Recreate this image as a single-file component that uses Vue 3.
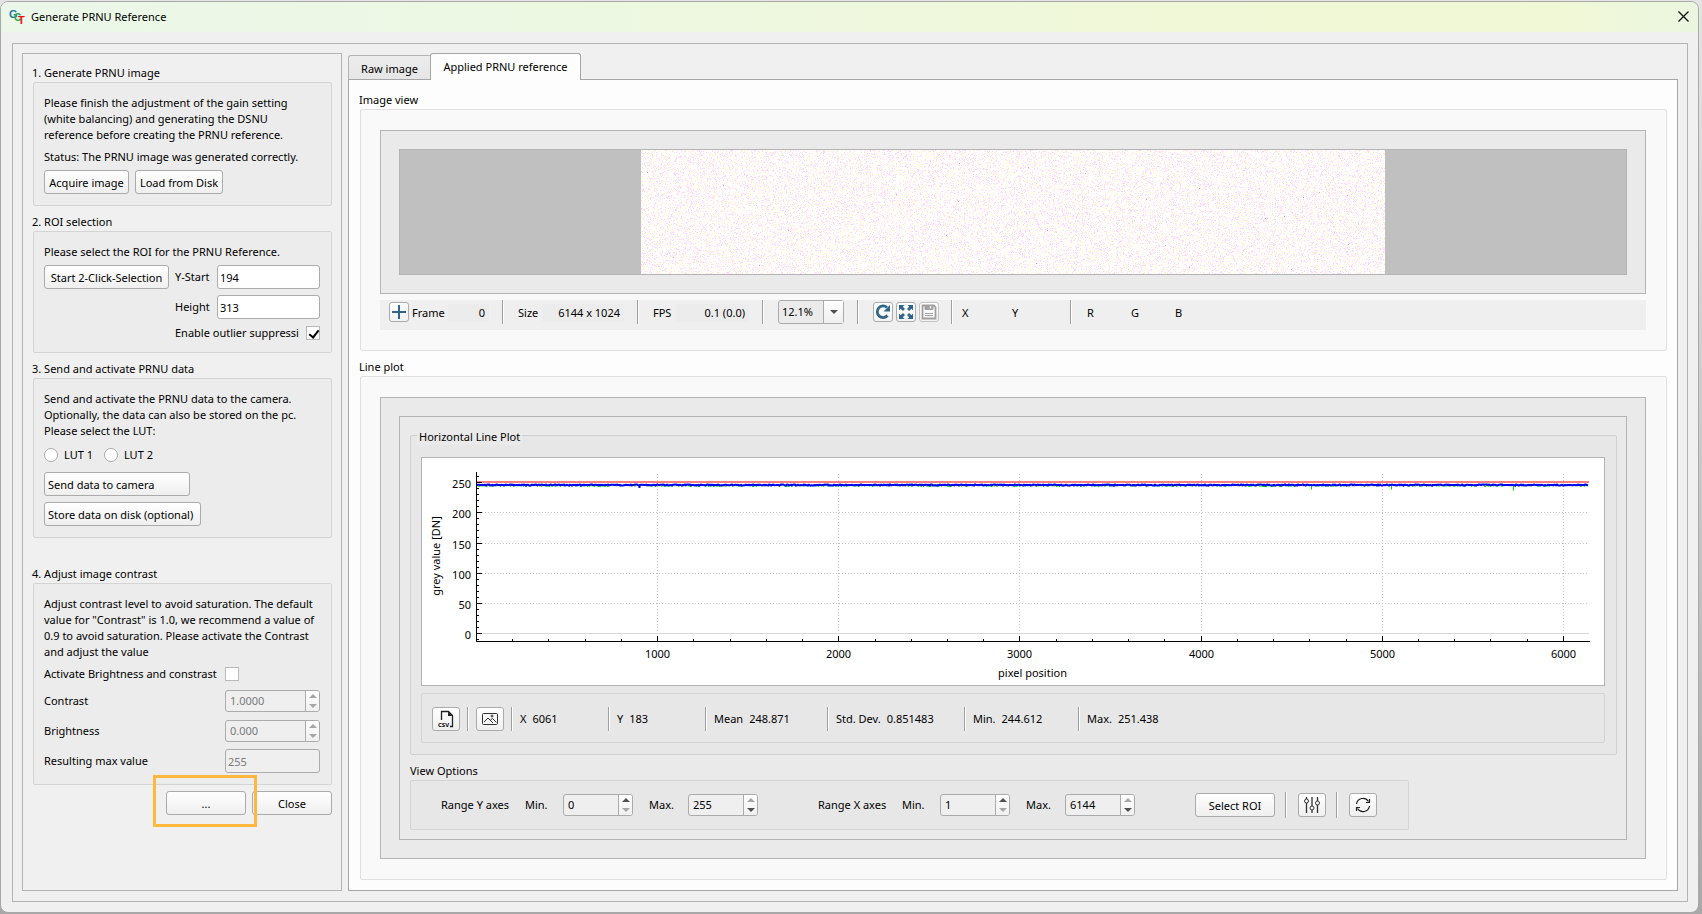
<template>
  <div class="desktop">
    <div class="window">
      <header class="titlebar">
        <svg class="logo" viewBox="0 0 16 16" width="16" height="16" aria-hidden="true">
          <text x="0" y="9" class="logo-g">G</text>
          <text x="5" y="12" class="logo-c">C</text>
          <text x="9" y="15" class="logo-t">T</text>
        </svg>
        <h1>Generate PRNU Reference</h1>
        <button class="window-close" aria-label="Close window">
          <svg viewBox="0 0 11 11" width="11" height="11">
            <path d="M0.5 0.5l10 10M10.5 0.5l-10 10" stroke="#111" stroke-width="1.300" fill="none" />
          </svg>
        </button>
      </header>

      <div class="frame">
        <aside class="sidebar">
          <h2>1. Generate PRNU image</h2>
          <section class="box">
            <p>
              Please finish the adjustment of the gain setting<br />
              (white balancing) and generating the DSNU<br />
              reference before creating the PRNU reference.
            </p>
            <p>Status: The PRNU image was generated correctly.</p>
            <div class="row">
              <button class="btn acquire">Acquire image</button>
              <button class="btn load">Load from Disk</button>
            </div>
          </section>

          <h2>2. ROI selection</h2>
          <section class="box">
            <p>Please select the ROI for the PRNU Reference.</p>
            <div class="roi">
              <button class="btn">Start 2-Click-Selection</button>
              <label for="y-start">Y-Start</label>
              <input id="y-start" v-model="yStart" type="text" class="field" />
              <label for="roi-height" class="second">Height</label>
              <input id="roi-height" v-model="roiHeight" type="text" class="field" />
              <div class="outlier">
                <label for="outlier">Enable outlier suppressi</label>
                <input id="outlier" v-model="outlier" type="checkbox" class="check" />
              </div>
            </div>
          </section>

          <h2>3. Send and activate PRNU data</h2>
          <section class="box">
            <p>
              Send and activate the PRNU data to the camera.<br />
              Optionally, the data can also be stored on the pc.<br />
              Please select the LUT:
            </p>
            <div class="luts">
              <label v-for="n in 2" :key="n">
                <input v-model="lut" type="radio" name="lut" class="radio" :value="n" />
                LUT {{ n }}
              </label>
            </div>
            <button class="btn left send">Send data to camera</button>
            <button class="btn left store">Store data on disk (optional)</button>
          </section>

          <h2 class="spaced">4. Adjust image contrast</h2>
          <section class="box">
            <p>
              Adjust contrast level to avoid saturation. The default<br />
              value for "Contrast" is 1.0, we recommend a value of<br />
              0.9 to avoid saturation. Please activate the Contrast<br />
              and adjust the value
            </p>
            <div class="setting activate">
              <label for="activate">Activate Brightness and constrast</label>
              <span class="slot">
                <input id="activate" v-model="activate" type="checkbox" class="check" />
              </span>
            </div>
            <div v-for="item in levels" :key="item.id" class="setting">
              <label :for="item.id">{{ item.label }}</label>
              <span class="slot spin disabled">
                <input :id="item.id" type="text" :value="item.value" disabled />
                <span class="arrows">
                  <button disabled :aria-label="item.label + ' up'"><i class="up"></i></button>
                  <button disabled :aria-label="item.label + ' down'"><i class="down"></i></button>
                </span>
              </span>
            </div>
            <div class="setting">
              <label for="max-value">Resulting max value</label>
              <input id="max-value" type="text" class="slot field" value="255" disabled />
            </div>
          </section>

          <div class="footer">
            <span class="marked"><button class="btn">...</button></span>
            <button class="btn">Close</button>
          </div>
        </aside>

        <main class="content">
          <nav class="tabs" role="tablist">
            <button
              v-for="name in tabs"
              :key="name"
              role="tab"
              class="tab"
              :class="{ active: name === activeTab }"
              :aria-selected="name === activeTab"
              @click="activeTab = name"
            >
              {{ name }}
            </button>
          </nav>

          <div class="pane">
            <h2>Image view</h2>
            <section class="group">
              <div class="panel">
                <div class="viewer">
                  <canvas ref="canvas" width="744" height="124"></canvas>
                </div>
              </div>
              <div class="statusbar">
                <button class="tool" aria-label="Add">
                  <svg viewBox="0 0 18 18" width="18" height="18">
                    <path d="M9 2v14M2 9h14" stroke="#2f6587" stroke-width="2" fill="none" />
                  </svg>
                </button>
                <span class="name frame-name">Frame</span>
                <output class="w-frame">0</output>
                <i class="sep wide"></i>
                <span class="name">Size</span>
                <output class="w-size">6144 x 1024</output>
                <i class="sep wide"></i>
                <span class="name fps">FPS</span>
                <output class="w-fps">0.1 (0.0)</output>
                <i class="sep wide"></i>
                <span class="combo">
                  <select aria-label="Zoom">
                    <option>12.1%</option>
                  </select>
                  <span class="combo-arrow"><i class="down"></i></span>
                </span>
                <i class="sep wide"></i>
                <div class="tools">
                  <button class="tool" aria-label="Reset view">
                    <svg viewBox="0 0 18 18" width="18" height="18">
                      <path d="M13.500 12.500A5.800 5.800 0 1 1 13 4.500" stroke="#2f6587" stroke-width="2.800" fill="none" />
                      <path d="M16 2v6.500h-6.500z" fill="#2f6587" />
                    </svg>
                  </button>
                  <button class="tool" aria-label="Fit to window">
                    <svg viewBox="0 0 18 18" width="18" height="18">
                      <path d="M2 2h5.500l-1.700 1.700 2.200 2.200-2.100 2.100-2.200-2.200L2 7.500zM16 2v5.500l-1.700-1.700-2.200 2.200-2.100-2.100 2.200-2.200L10.500 2zM2 16v-5.500l1.700 1.700 2.200-2.200 2.100 2.100-2.200 2.200L7.500 16zM16 16h-5.500l1.700-1.700-2.200-2.200 2.100-2.100 2.200 2.200 1.700-1.700z" fill="#2f6587" />
                    </svg>
                  </button>
                  <button class="tool" aria-label="Save" disabled>
                    <svg viewBox="0 0 18 18" width="18" height="18" fill="none" stroke="#a0a0a0">
                      <path d="M2.500 2.500h11.500l1.500 1.500v11.500h-13z" stroke-width="1.800" />
                      <path d="M5 2v4.500h8V2" fill="#a0a0a0" />
                      <path d="M10.500 3v2.500" stroke="#eee" stroke-width="1.500" />
                      <path d="M5 10.500h8M5 12.500h8" />
                    </svg>
                  </button>
                </div>
                <i class="sep narrow"></i>
                <span class="coord">X</span>
                <span class="coord last">Y</span>
                <i class="sep narrow"></i>
                <div class="rgb">
                  <span v-for="c in ['R', 'G', 'B']" :key="c">{{ c }}</span>
                </div>
              </div>
            </section>

            <h2>Line plot</h2>
            <section class="group">
              <div class="panel">
                <div class="inner">
                  <div class="hplot">
                    <h3>Horizontal Line Plot</h3>
                    <div ref="plotBox" class="plot">
                      <svg :width="plotWidth" height="227">
                        <g class="grid">
                          <line v-for="v in [50, 100, 150, 200]" :key="v" x1="60" :x2="right" :y1="y(v)" :y2="y(v)" />
                          <line v-for="v in xMajor" :key="v" :x1="x(v)" :x2="x(v)" y1="16" :y2="y(0)" />
                        </g>
                        <line class="zero" x1="55" :x2="right" :y1="y(0)" :y2="y(0)" />
                        <line class="red" x1="55" :x2="right" y1="24" y2="24" />
                        <path :d="greenLine" stroke="#00e000" fill="none" />
                        <path :d="blueLine" stroke="#0000f0" stroke-width="2" fill="none" />
                        <g class="axis">
                          <line x1="54.500" x2="54.500" y1="14" y2="183" />
                          <line x1="54" :x2="right + 1" y1="183.500" y2="183.500" />
                          <line v-for="v in yTicks" :key="v" x1="54" :x2="v % 50 ? 57 : 60" :y1="y(v)" :y2="y(v)" />
                          <line v-for="v in xTicks" :key="v" :x1="x(v)" :x2="x(v)" y1="183" :y2="v % 1000 ? 181 : 178" />
                        </g>
                        <text v-for="v in [0, 50, 100, 150, 200, 250]" :key="v" x="49" :y="y(v) + 5" text-anchor="end">{{ v }}</text>
                        <text v-for="v in xMajor" :key="v" :x="x(v)" y="200" text-anchor="middle">{{ v }}</text>
                        <text :x="(54 + right) / 2" y="219" text-anchor="middle">pixel position</text>
                        <text transform="translate(18 98) rotate(-90)" text-anchor="middle">grey value [DN]</text>
                      </svg>
                    </div>
                    <div class="stats">
                      <button class="btn icon" aria-label="Export CSV">
                        <svg viewBox="0 0 18 18" width="18" height="18">
                          <path d="M4.500 10V1.500h7l4 4v11h-2.500" fill="none" stroke="#222" stroke-width="1.300" />
                          <path d="M11 1.500v4.500h4.500z" fill="#222" />
                          <text x="1" y="17" class="csv">CSV</text>
                        </svg>
                      </button>
                      <i class="sep"></i>
                      <button class="btn icon" aria-label="Export image">
                        <svg viewBox="0 0 18 18" width="18" height="18" fill="none" stroke="#333">
                          <rect x="1.500" y="3.500" width="15" height="11" rx="1" />
                          <path d="M3 12l4-4 5 5M9.500 10l2-1.500 4 4" />
                          <circle cx="11" cy="6" r="1" />
                        </svg>
                      </button>
                      <template v-for="s in stats" :key="s.label">
                        <i class="sep"></i>
                        <span class="stat" :class="s.size">{{ s.label }} <output>{{ s.value }}</output></span>
                      </template>
                    </div>
                  </div>

                  <h2>View Options</h2>
                  <div class="options">
                    <div v-for="r in ranges" :key="r.axis" class="range">
                      <span class="range-name">Range {{ r.axis }} axes</span>
                      <template v-for="end in ['Min', 'Max']" :key="end">
                        <label :for="r.axis + end">{{ end }}.</label>
                        <span class="spin">
                          <input :id="r.axis + end" v-model="r[end]" type="text" />
                          <span class="arrows">
                            <button :disabled="end === 'Max'" aria-label="Up"><i class="up"></i></button>
                            <button :disabled="end === 'Min'" aria-label="Down"><i class="down"></i></button>
                          </span>
                        </span>
                      </template>
                    </div>
                    <button class="btn select-roi">Select ROI</button>
                    <i class="sep"></i>
                    <button class="btn icon" aria-label="Plot settings">
                      <svg viewBox="0 0 18 18" width="18" height="18" fill="none" stroke="#333">
                        <path d="M3.500 1v2M3.500 7v10M9 1v9M9 14v3M14.500 1v4M14.500 9v8" stroke-width="1.300" />
                        <circle cx="3.500" cy="5" r="2" />
                        <circle cx="9" cy="12" r="2" />
                        <circle cx="14.500" cy="7" r="2" />
                      </svg>
                    </button>
                    <i class="sep"></i>
                    <button class="btn icon" aria-label="Refresh">
                      <svg viewBox="0 0 18 18" width="18" height="18" fill="none" stroke="#222" stroke-width="1.200">
                        <path d="M2.500 8a6.500 6.500 0 0 1 12-2.500M15.500 10a6.500 6.500 0 0 1-12 2.500" />
                        <path d="M15.500 3v3.500h-3.500M2.500 15v-3.500h3.500" />
                      </svg>
                    </button>
                  </div>
                </div>
              </div>
            </section>
          </div>
        </main>
      </div>
    </div>
  </div>
</template>

<script setup>
import { ref, reactive, computed, onMounted, onUnmounted } from "vue";

const yStart = ref("194");
const roiHeight = ref("313");
const outlier = ref(true);
const activate = ref(false);
const lut = ref(null);

const tabs = ["Raw image", "Applied PRNU reference"];
const activeTab = ref("Applied PRNU reference");

const levels = [
  { id: "contrast", label: "Contrast", value: "1.0000" },
  { id: "brightness", label: "Brightness", value: "0.000" },
];

const stats = [
  { label: "X", value: "6061", size: "s-x" },
  { label: "Y", value: "183", size: "s-x" },
  { label: "Mean", value: "248.871", size: "s-mean" },
  { label: "Std. Dev.", value: "0.851483", size: "s-dev" },
  { label: "Min.", value: "244.612", size: "s-min" },
  { label: "Max.", value: "251.438", size: "s-min" },
];

const ranges = reactive([
  { axis: "Y", Min: "0", Max: "255" },
  { axis: "X", Min: "1", Max: "6144" },
]);

// plot scales
const plotBox = ref(null);
const plotWidth = ref(1182);
const right = computed(() => plotWidth.value - 15);
const x = (v) => 54 + Math.round((v / 6144) * (right.value - 54)) + 0.5;
const y = (v) => 175 - Math.round(v * 0.603) + 0.5;
const xMajor = [1000, 2000, 3000, 4000, 5000, 6000];
const xTicks = Array.from({ length: 30 }, (_, i) => (i + 1) * 200);
const yTicks = Array.from({ length: 28 }, (_, i) => (i - 1) * 10);

// small repeatable generator, so the noise stays the same between renders
const random = (seed) => () => {
  seed = (seed * 1664525 + 1013904223) % 4294967296;
  return seed / 4294967296;
};

const noiseLine = (seed, base, spread, spikes) => {
  const rnd = random(seed);
  let d = "";
  for (let px = 55; px < right.value; px++) {
    d += `${d ? "L" : "M"}${px} ${(base + (rnd() - 0.5) * spread).toFixed(1)}`;
  }
  spikes.forEach(([v, depth]) => {
    d += `M${x(v)} ${base}v${depth}`;
  });
  return d;
};

const greenLine = computed(() =>
  noiseLine(7, 27.5, 2.5, [[4610, 4], [5050, 4], [5725, 5]])
);
const blueLine = computed(() => noiseLine(21, 27, 1, [[900, 3]]));

const canvas = ref(null);
let observer = null;

const drawNoise = () => {
  const { width, height } = canvas.value;
  const ctx = canvas.value.getContext("2d");
  const rnd = random(3);
  ctx.fillStyle = "#fffdfd";
  ctx.fillRect(0, 0, width, height);
  const colors = ["#ffd6ff", "#ffe4f6", "#ffffd8", "#ffeee6", "#f8fff0"];
  for (let py = 0; py < height; py++) {
    for (let px = 0; px < width; px++) {
      const n = rnd();
      if (n < 0.38) {
        ctx.fillStyle = colors[Math.floor(rnd() * colors.length)];
        ctx.fillRect(px, py, 1, 1);
      } else if (n > 0.9997) {
        ctx.fillStyle = "#f08cf0";
        ctx.fillRect(px, py, 1, 1);
      }
    }
  }
};

onMounted(() => {
  drawNoise();
  plotWidth.value = plotBox.value.clientWidth;
  observer = new ResizeObserver(() => {
    plotWidth.value = plotBox.value.clientWidth;
  });
  observer.observe(plotBox.value);
});

onUnmounted(() => {
  observer.disconnect();
});
</script>

<style>
body {
  margin: 0;
}
</style>

<style scoped>
* {
  box-sizing: border-box;
}

.desktop {
  display: flex;
  min-height: 100vh;
  padding: 1px 3px 1px 0;
  background: linear-gradient(#e4e4e4, #c4c4c4 60%, #a8a8a8);
  font-family: "Noto Sans", "Segoe UI", sans-serif;
  font-size: 11px;
  line-height: 16px;
  color: #000;
}

button,
input,
select {
  font: inherit;
  color: inherit;
}

h1,
h2,
h3,
p {
  margin: 0;
  font-size: inherit;
  font-weight: normal;
}

h2 {
  margin-left: -1px;
  padding: 7px 0 1px;
  line-height: 17px;
}

.window {
  flex: 1;
  display: flex;
  flex-direction: column;
  min-width: 0;
  border: 1px solid #a9a9a9;
  border-radius: 8px;
  background: #f0f0f0;
  overflow: hidden;
}

.titlebar {
  display: flex;
  align-items: center;
  height: 30px;
  padding: 0 9px 0 8px;
  gap: 6px;
  background: linear-gradient(90deg, #ebf7e9, #edf8e2 35%, #f1f8d6 75%, #f0f8d6 92%, #ebf6e0);
}

.titlebar h1 {
  flex: 1;
}

.logo {
  font-family: "Liberation Sans", sans-serif;
  font-weight: bold;
}

.logo-g {
  font-size: 11px;
  fill: #2673a8;
}

.logo-c {
  font-size: 10px;
  fill: #29a84c;
}

.logo-t {
  font-size: 11px;
  fill: #f01010;
}

.window-close {
  display: flex;
  padding: 0 0 1px;
  border: none;
  background: none;
}

.frame {
  flex: 1;
  display: flex;
  gap: 6px;
  margin: 11px 10px 10px 11px;
  padding: 9px 9px 10px;
  border: 1px solid #b4b4b4;
}

.sidebar {
  flex: 0 0 320px;
  padding: 3px 9px 3px 10px;
  border: 1px solid #b4b4b4;
}

.sidebar .spaced {
  margin-top: 20px;
}

.box {
  display: flex;
  flex-direction: column;
  align-items: flex-start;
  gap: 6px;
  padding: 12px 11px 11px 10px;
  border: 1px solid #d4d4d4;
  border-radius: 2px;
  background: #ececec;
  white-space: nowrap;
}

.box p:last-of-type {
  margin-bottom: -1px;
}

.row {
  display: flex;
  gap: 6px;
}

.btn {
  display: inline-flex;
  align-items: center;
  justify-content: center;
  height: 24px;
  padding: 1px 3px 0;
  border: 1px solid #ababab;
  border-radius: 3px;
  background: linear-gradient(#fff, #efefef);
  white-space: nowrap;
}

.btn.left {
  justify-content: flex-start;
}

.acquire {
  width: 85px;
}

.load {
  width: 88px;
}

.send {
  width: 146px;
}

.store {
  width: 157px;
}

.btn.icon {
  width: 28px;
  padding: 0;
}

.roi {
  display: grid;
  grid-template-columns: 125px 36px 103px;
  column-gap: 6px;
  row-gap: 6px;
  align-items: center;
}

.second {
  grid-column: 2;
}

.outlier {
  grid-column: 2 / 4;
  display: flex;
  align-items: center;
  justify-content: space-between;
  height: 16px;
}

.field {
  width: 100%;
  height: 24px;
  padding: 0 2px;
  border: 1px solid #ababab;
  border-radius: 3px;
  background: #fff;
}

.field:disabled {
  background: #efefef;
  color: #7a7a7a;
}

.check {
  appearance: none;
  width: 14px;
  height: 14px;
  margin: 0;
  border: 1px solid #b9b9b9;
  background: #fff;
}

.check:checked::after {
  content: "";
  display: block;
  width: 4px;
  height: 8px;
  margin: 1px 0 0 4px;
  border: solid #000;
  border-width: 0 2px 2px 0;
  transform: rotate(38deg);
}

.radio {
  appearance: none;
  width: 14px;
  height: 14px;
  margin: 0;
  border: 1px solid #ababab;
  border-radius: 50%;
  background: #fff;
}

.radio:checked {
  border-width: 4px;
}

.luts {
  display: flex;
  gap: 11px;
  height: 22px;
}

.luts label {
  display: flex;
  align-items: center;
  gap: 6px;
}

.setting {
  display: flex;
  align-items: center;
  justify-content: space-between;
  width: 100%;
  height: 24px;
}

.activate {
  height: 18px;
}

.slot {
  flex: 0 0 95px;
}

.slot .check {
  display: block;
}

.spin {
  display: flex;
  width: 70px;
  height: 22px;
  border: 1px solid #ababab;
  border-radius: 3px;
  background: #efefef;
  overflow: hidden;
}

.spin input {
  flex: 1;
  min-width: 0;
  padding: 0 4px;
  border: none;
  background: none;
}

.spin.disabled {
  color: #7a7a7a;
}

.arrows {
  display: flex;
  flex-direction: column;
  flex: 0 0 14px;
  border-left: 1px solid #ababab;
  background: linear-gradient(#fff, #f0f0f0);
}

.arrows button {
  flex: 1;
  display: flex;
  align-items: center;
  justify-content: center;
  padding: 0;
  border: none;
  background: none;
}

.up,
.down {
  border: solid transparent;
  border-width: 0 4px;
}

.up {
  border-bottom: 4px solid #505050;
}

.down {
  border-top: 4px solid #505050;
}

button:disabled .up {
  border-bottom-color: #a6a6a6;
}

button:disabled .down {
  border-top-color: #a6a6a6;
}

.footer {
  display: flex;
  justify-content: flex-end;
  gap: 6px;
  padding-top: 6px;
}

.footer .btn {
  width: 80px;
}

.marked {
  position: relative;
}

.marked::after {
  content: "";
  position: absolute;
  inset: -16px -11px -12px -13px;
  border: 3px solid #ffb83d;
  pointer-events: none;
}

.content {
  flex: 1;
  min-width: 0;
  display: flex;
  flex-direction: column;
}

.tabs {
  display: flex;
  align-items: flex-end;
  height: 26px;
}

.tab {
  height: 24px;
  width: 82px;
  padding: 2px 0 0;
  border: 1px solid #b4b4b4;
  border-width: 1px 0 0 1px;
  border-radius: 3px 0 0 0;
  background: linear-gradient(#ececec, #e6e6e6);
}

.tab.active {
  height: 27px;
  width: 151px;
  margin-bottom: -1px;
  padding: 0;
  border-width: 1px 1px 0;
  border-color: #a6a6a6;
  border-radius: 3px 3px 0 0;
  background: #fdfdfd;
  z-index: 1;
}

.pane {
  flex: 1;
  padding: 4px 10px 9px 11px;
  border: 1px solid #a6a6a6;
  background: #fdfdfd;
}

.group {
  padding: 20px 20px 20px 19px;
  border: 1px solid #e0e0e0;
  border-radius: 2px;
  background: #f9f9f9;
}

.panel {
  padding: 18px;
  border: 1px solid #b4b4b4;
  background: #eaeaea;
}

.viewer {
  display: flex;
  justify-content: center;
  border: 1px solid #b4b4b4;
  background: #c0c0c0;
}

.statusbar {
  display: flex;
  align-items: flex-start;
  height: 30px;
  margin-top: 6px;
  padding-left: 9px;
  background: #efefef;
  line-height: 26px;
  white-space: nowrap;
}

.tool {
  display: flex;
  width: 20px;
  height: 20px;
  margin-top: 2px;
  padding: 0;
  border: 1px solid #ababab;
  border-radius: 3px;
  background: linear-gradient(#fff, #f2f2f2);
}

.tool:disabled {
  border-color: #c4c4c4;
}

.tools {
  display: flex;
  gap: 3px;
}

.sep {
  flex: 0 0 2px;
  height: 24px;
  border-left: 1px solid #a0a0a0;
  border-right: 1px solid #fff;
}

.sep.wide {
  margin: 0 14px 0 13px;
}

.sep.narrow {
  margin: 0 9px 0 12px;
}

.name {
  width: 24px;
}

.name.fps {
  width: 23px;
}

.frame-name {
  width: 36px;
  margin-left: 3px;
}

.statusbar output {
  height: 18px;
  margin-top: 4px;
  padding-right: 4px;
  background: #ececec;
  line-height: 18px;
  text-align: right;
}

.w-frame {
  width: 41px;
}

.w-size {
  width: 82px;
}

.w-fps {
  width: 73px;
}

.combo {
  display: flex;
  width: 66px;
  height: 24px;
  border: 1px solid #ababab;
  border-radius: 3px;
  background: #ebebeb;
  line-height: 16px;
}

.combo select {
  appearance: none;
  flex: 1;
  min-width: 0;
  padding: 0 3px;
  border: none;
  background: none;
}

.combo-arrow {
  display: flex;
  align-items: center;
  justify-content: center;
  width: 20px;
  border-left: 1px solid #ababab;
  background: linear-gradient(#fff, #efefef);
}

.coord {
  width: 50px;
}

.coord.last {
  width: 46px;
}

.rgb {
  display: grid;
  grid-template-columns: repeat(3, 44px);
  padding-left: 6px;
}

.inner {
  padding: 18px 9px 9px 10px;
  border: 1px solid #b4b4b4;
}

.inner h2 {
  margin-left: 0;
}

.hplot {
  padding: 0 11px 11px 10px;
  border: 1px solid #d0d0d0;
  border-radius: 2px;
  background: #e7e7e7;
}

.hplot h3 {
  width: fit-content;
  height: 16px;
  margin: -7px 0 12px -4px;
  padding: 0 2px;
  background: #eaeaea;
}

.plot {
  border: 1px solid #b4b4b4;
  background: #fff;
  overflow: hidden;
}

.plot svg {
  display: block;
}

.plot line {
  shape-rendering: crispEdges;
}

.grid line {
  stroke: #c4c4c4;
  stroke-dasharray: 1 2;
}

.zero {
  stroke: #d8d8d8;
}

.red {
  stroke: #ff8080;
  stroke-width: 2px;
}

.axis line {
  stroke: #000;
}

.csv {
  font-size: 6px;
  font-weight: bold;
}

.stats {
  display: flex;
  align-items: center;
  gap: 7px;
  height: 50px;
  margin-top: 7px;
  padding: 2px 10px 0;
  border: 1px solid #d4d4d4;
  border-radius: 2px;
  white-space: nowrap;
}

.stat {
  display: flex;
  gap: 6px;
}

.s-x {
  width: 81px;
}

.s-mean {
  width: 106px;
}

.s-dev {
  width: 121px;
}

.s-min {
  width: 98px;
}

.options {
  display: flex;
  align-items: center;
  width: fit-content;
  height: 50px;
  padding: 0 31px 0 30px;
  border: 1px solid #d4d4d4;
  border-radius: 2px;
  background: #e7e7e7;
  white-space: nowrap;
}

.range {
  display: grid;
  grid-template-columns: 84px 38px 86px 39px 70px;
  align-items: center;
  margin-right: 60px;
}

.select-roi {
  width: 80px;
}

.options .sep {
  height: 26px;
  margin: 0 11px 0 10px;
}
</style>
